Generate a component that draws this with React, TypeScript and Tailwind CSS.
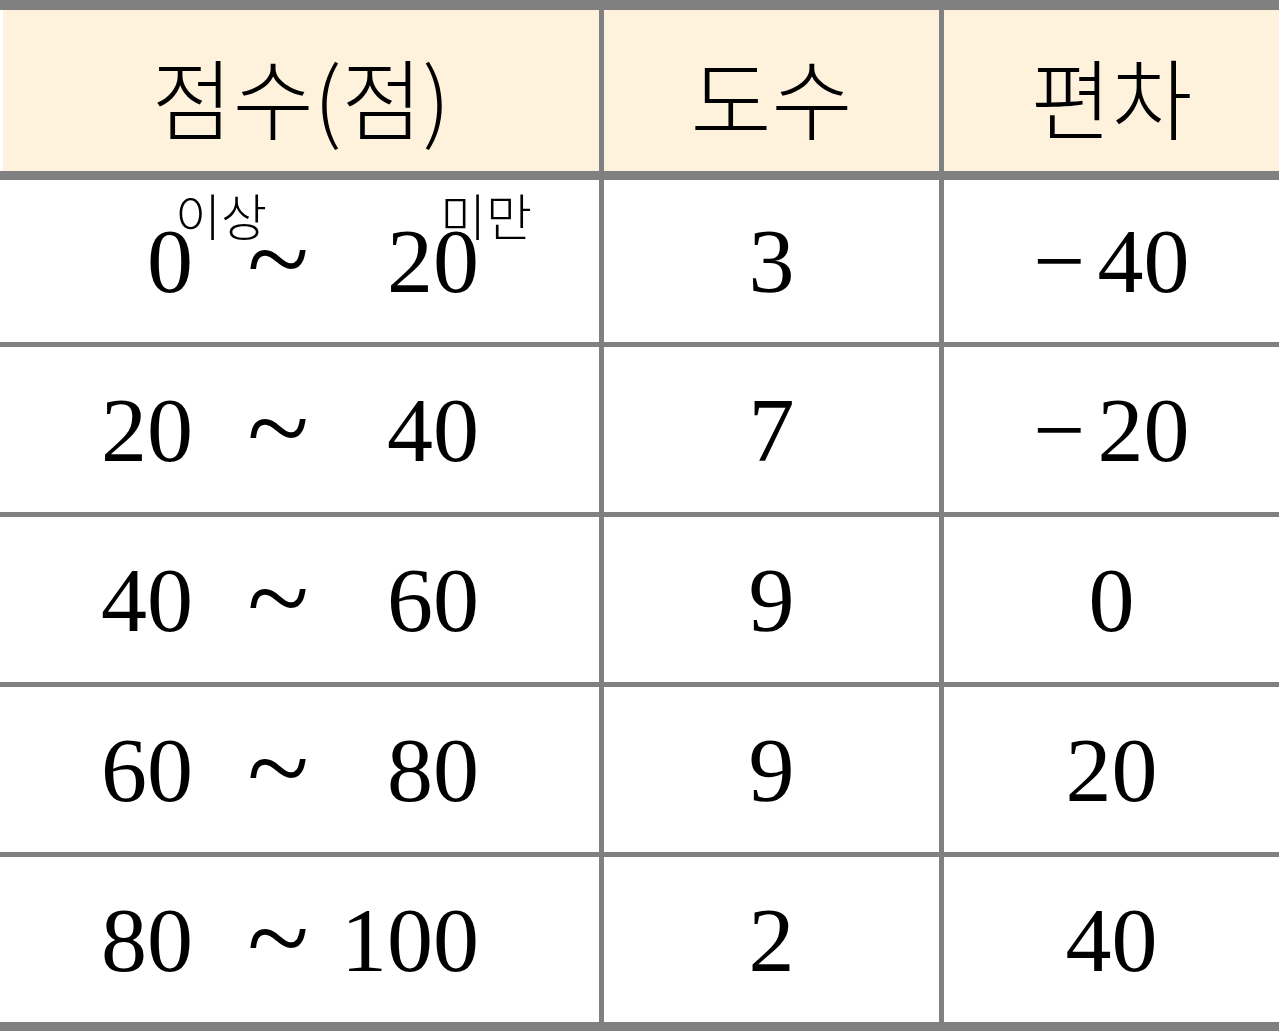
const rows = [
  { from: "0", to: "20", count: "3", dev: "−40", notes: true },
  { from: "20", to: "40", count: "7", dev: "−20" },
  { from: "40", to: "60", count: "9", dev: "0" },
  { from: "60", to: "80", count: "9", dev: "20" },
  { from: "80", to: "100", count: "2", dev: "40" },
];

const serif = "font-['Liberation_Serif',serif]";
const kr = "font-['Noto_Sans_CJK_KR','Noto_Sans',sans-serif]";

const Deviation = ({ value }: { value: string }) => {
  if (value.startsWith("−")) {
    return (
      <span>
        <span className="mr-[12px]">−</span>
        {value.slice(1)}
      </span>
    );
  }
  return <span>{value}</span>;
};

const App = () => {
  return (
    <div className="w-[1279px] h-[1031px] bg-white text-black overflow-hidden">
      <div className="border-t-[10px] border-b-[10px] border-[#808080]">
        {/* header */}
        <div className={`flex h-[170px] border-b-[9px] border-[#808080] bg-[#fef2dc] text-[88px] font-light leading-none ${kr}`}>
          <div className="w-[599px] flex items-center justify-center pt-[8px] border-l-[3px] border-white">점수(점)</div>
          <div className="w-[340px] border-l-[5px] border-[#808080] flex items-center justify-center pt-[8px]">도수</div>
          <div className="w-[340px] border-l-[5px] border-[#808080] flex items-center justify-center pt-[8px]">편차</div>
        </div>

        {rows.map((r, i) => (
          <div
            key={r.from}
            className={`flex ${i === 0 ? "h-[162px]" : "h-[170px] border-t-[5px] border-[#808080]"} text-[92px] leading-none ${serif}`}
          >
            <div className="w-[599px] flex items-center">
              <div className="relative w-[193px] text-right">
                {r.from}
                {r.notes && (
                  <span className={`absolute left-[175px] top-[-26px] text-[50px] font-light whitespace-nowrap ${kr}`}>이상</span>
                )}
              </div>
              <div className="w-[116px] text-right text-[114px] pb-[4px]">~</div>
              <div className="relative w-[170px] text-right">
                {r.to}
                {r.notes && (
                  <span className={`absolute left-[131px] top-[-26px] text-[50px] font-light whitespace-nowrap ${kr}`}>미만</span>
                )}
              </div>
            </div>
            <div className="w-[340px] border-l-[5px] border-[#808080] flex items-center justify-center">{r.count}</div>
            <div className="w-[340px] border-l-[5px] border-[#808080] flex items-center justify-center">
              <Deviation value={r.dev} />
            </div>
          </div>
        ))}
      </div>
    </div>
  );
};

export default App;
